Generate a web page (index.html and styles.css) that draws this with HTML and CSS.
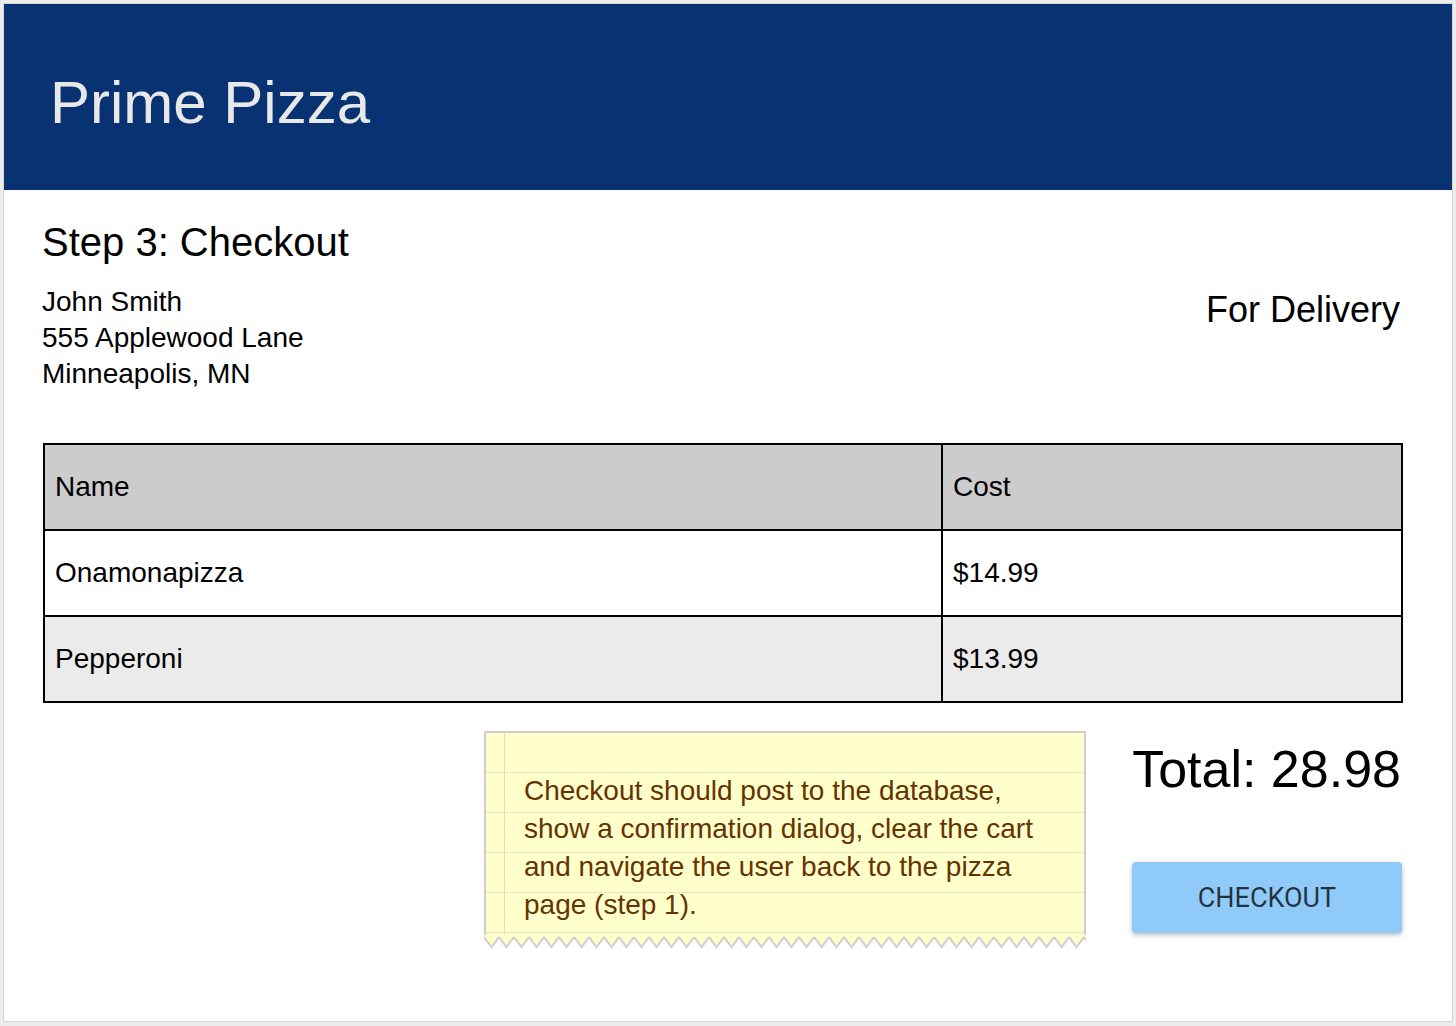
FILE: index.html
```html
<!DOCTYPE html>
<html lang="en">
<head>
<meta charset="utf-8">
<title>Prime Pizza - Checkout</title>
<link rel="stylesheet" href="styles.css">
</head>
<body>
<div class="frame">
  <header class="topbar">
    <h1 class="brand">Prime Pizza</h1>
  </header>
  <main class="content">
    <h2 class="step">Step 3: Checkout</h2>
    <div class="info">
      <div class="address">
        <div>John Smith</div>
        <div>555 Applewood Lane</div>
        <div>Minneapolis, MN</div>
      </div>
      <div class="mode">For Delivery</div>
    </div>
    <table class="orders">
      <colgroup><col class="col-name"><col class="col-cost"></colgroup>
      <thead>
        <tr><th>Name</th><th>Cost</th></tr>
      </thead>
      <tbody>
        <tr><td>Onamonapizza</td><td>$14.99</td></tr>
        <tr class="alt"><td>Pepperoni</td><td>$13.99</td></tr>
      </tbody>
    </table>
    <div class="summary">
      <div class="note">
        <div class="note-body">Checkout should post to the database, show a confirmation dialog, clear the cart and navigate the user back to the pizza page (step 1).</div>
        <svg class="note-edge" width="602" height="15" viewBox="0 0 602 15">
          <defs>
            <pattern id="zz" x="0" y="0" width="15" height="15" patternUnits="userSpaceOnUse">
              <polygon points="0,0 15,0 15,2 7.5,12 0,2" fill="#ffffcc"/>
              <polyline points="0,2 7.5,12 15,2" fill="none" stroke="#cfcfcf" stroke-width="2"/>
            </pattern>
          </defs>
          <rect x="0" y="0" width="602" height="15" fill="url(#zz)"/>
        </svg>
      </div>
      <div class="checkout-col">
        <div class="total">Total: 28.98</div>
        <button class="btn" type="button">CHECKOUT</button>
      </div>
    </div>
  </main>
</div>
</body>
</html>
```

FILE: styles.css
```css
body {
  margin: 0;
  background: #ececec;
  font-family: "Liberation Sans", Arial, sans-serif;
  color: #000;
}

.frame {
  margin: 3px;
  width: 1448px;
  height: 1017px;
  border: 1px solid #d6d6d6;
  background: #fff;
}

.topbar {
  height: 186px;
  box-sizing: border-box;
  background: #083272;
  padding: 64px 0 0 46px;
}

.brand {
  margin: 0;
  font-size: 60px;
  line-height: 69px;
  font-weight: normal;
  color: #e8e8e8;
}

.content {
  padding: 0 49px 0 39px;
}

.step {
  margin: 29px 0 0 -1px;
  font-size: 40px;
  line-height: 46px;
  font-weight: normal;
}

.info {
  display: flex;
  justify-content: space-between;
  align-items: flex-start;
  margin-top: 19px;
}

.address {
  font-size: 28px;
  line-height: 36px;
  margin-left: -1px;
}

.mode {
  font-size: 36px;
  line-height: 42px;
  margin-top: 5px;
  margin-right: 3px;
}

.orders {
  margin-top: 51px;
  width: 1360px;
  border-collapse: collapse;
  table-layout: fixed;
  font-size: 28px;
}

.col-name { width: 898px; }

.orders th,
.orders td {
  border: 2px solid #000;
  height: 84px;
  padding: 0 10px;
  text-align: left;
  font-weight: normal;
  vertical-align: middle;
}

.orders th { background: #cccccc; }
.orders .alt td { background: #ebebeb; }

.summary {
  display: flex;
  justify-content: flex-end;
  gap: 46px;
  margin-top: 28px;
}

.note {
  width: 602px;
}

.note-body {
  box-sizing: border-box;
  height: 204px;
  border: 2px solid #cfcfcf;
  border-bottom: none;
  padding: 39px 30px 0 38px;
  font-size: 28px;
  line-height: 38px;
  color: #663300;
  background:
    linear-gradient(to right, transparent 18px, #fcd2b0 18px, #fcd2b0 19px, transparent 19px),
    repeating-linear-gradient(to bottom, transparent 0, transparent 39px, #e8e3c4 39px, #e8e3c4 40px),
    #ffffcc;
}

.note-edge {
  display: block;
}

.checkout-col {
  width: 270px;
  margin-right: 1px;
  padding-top: 8px;
  display: flex;
  flex-direction: column;
}

.total {
  font-size: 52px;
  line-height: 60px;
  text-align: right;
  margin-right: 1px;
}

.btn {
  margin-top: 63px;
  height: 71px;
  border: none;
  border-radius: 4px;
  background: #90caf9;
  font-family: Roboto, "Liberation Sans", sans-serif;
  font-size: 27px;
  color: rgba(0, 0, 0, 0.76);
  box-shadow: 0 2px 5px rgba(0, 0, 0, 0.26);
  cursor: pointer;
}
```
